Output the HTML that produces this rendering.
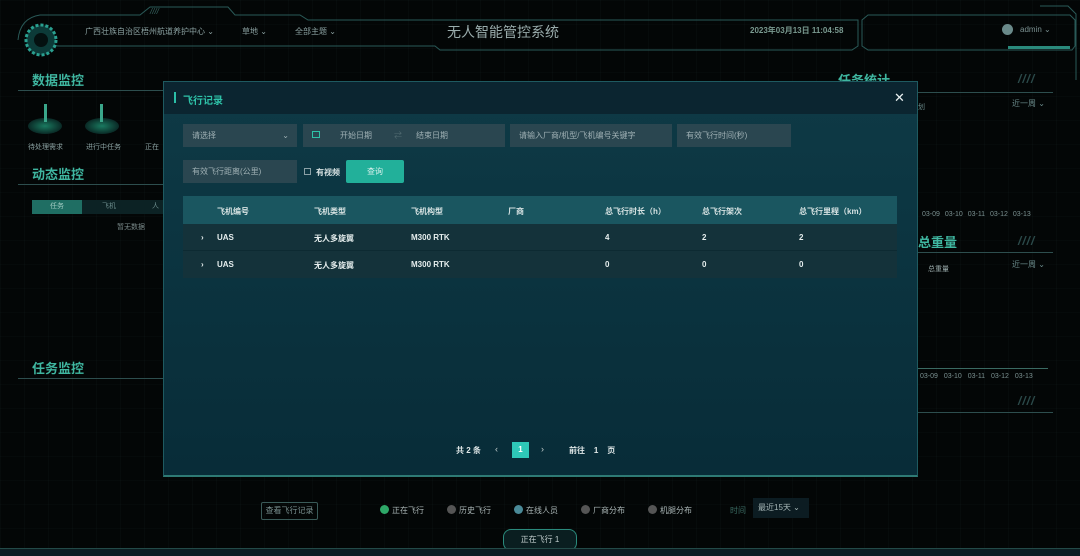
<!DOCTYPE html>
<html><head><meta charset="utf-8"><style>
*{margin:0;padding:0;box-sizing:border-box}
body{width:1080px;height:556px;background:#030606;overflow:hidden;position:relative;font-family:"Liberation Sans","Noto Sans CJK SC",sans-serif;color:#cfd8d8;font-size:8px}
.a{position:absolute}
.grid{position:absolute;inset:0;background-image:linear-gradient(90deg,rgba(40,70,70,.09) 1px,transparent 1px),linear-gradient(rgba(40,70,70,.06) 1px,transparent 1px);background-size:24px 24px}
.sec{position:absolute;color:#3fb6a0;font-size:13px;font-weight:bold}
.ln{position:absolute;height:1px;background:#2d4e4e}
.inp{position:absolute;background:#2a4650;height:23px;color:#9fb0b4;font-size:8px;line-height:23px;padding-left:9px;white-space:nowrap}
.th{position:absolute;top:206px;font-size:8px;color:#d6e2e2;font-weight:bold}
.td{position:absolute;font-size:8px;color:#e6eeee;font-weight:bold}
.st{position:absolute;color:#2b4a4a;font-size:12px;letter-spacing:1px;font-style:italic;font-weight:bold}
.lg{position:absolute;top:505px;font-size:8px;color:#aab6b6;white-space:nowrap}
.dot{display:inline-block;width:9px;height:9px;border-radius:50%;vertical-align:-1px;margin-right:3px}
</style></head><body>
<div class="grid"></div>
<svg class="a" style="left:0;top:0" width="1080" height="80">
<g fill="none" stroke="#2a5a58" stroke-width="1">
<path d="M18 40 Q20 18 40 15 L140 15 L150 7 L228 7 L235 15 L300 15 L308 20 L858 20 L858 46 L852 50 L440 50 L435 46 L60 46 Q40 46 40 40"/>
<path d="M862 20 L862 46 L868 50 L1072 50 L1075 46 L1075 20 L1070 15 L868 15 Z"/>
<path d="M1040 6 L1068 6 L1076 14 L1076 82 L1064 92"/>
</g>
<rect x="1008" y="46" width="62" height="3" fill="#2a8a7c"/>
<circle cx="41" cy="40" r="15" fill="#0c3a38" stroke="#2aa090" stroke-width="3" stroke-dasharray="3 2"/>
<circle cx="41" cy="40" r="7" fill="#041010"/>
<text x="150" y="14" fill="#3a6a66" font-size="8" font-style="italic">////</text>
</svg>
<div class="a" style="left:85px;top:26px;color:#8aa0a0;font-size:8px">广西壮族自治区梧州航道养护中心 ⌄</div>
<div class="a" style="left:242px;top:26px;color:#8aa0a0;font-size:8px">草地 ⌄</div>
<div class="a" style="left:295px;top:26px;color:#8aa0a0;font-size:8px">全部主题 ⌄</div>
<div class="a" style="left:447px;top:22px;color:#9aacac;font-size:14px">无人智能管控系统</div>
<div class="a" style="left:750px;top:25px;color:#7a9a90;font-size:8px;font-weight:bold">2023年03月13日 11:04:58</div>
<div class="a" style="left:1002px;top:24px;width:11px;height:11px;border-radius:50%;background:#6a8a8a"></div>
<div class="a" style="left:1020px;top:25px;color:#7a9090;font-size:8px">admin ⌄</div>
<div class="sec" style="left:32px;top:70px">数据监控</div>
<div class="ln" style="left:18px;top:90px;width:145px"></div>
<div class="sec" style="left:32px;top:164px">动态监控</div>
<div class="ln" style="left:18px;top:184px;width:145px"></div>
<div class="sec" style="left:32px;top:358px">任务监控</div>
<div class="ln" style="left:18px;top:378px;width:145px"></div>
<div class="a" style="left:28px;top:118px;width:34px;height:16px;border-radius:50%;background:radial-gradient(#1a7a60,#0a2a26 70%)"></div>
<div class="a" style="left:85px;top:118px;width:34px;height:16px;border-radius:50%;background:radial-gradient(#1a7a60,#0a2a26 70%)"></div>
<div class="a" style="left:44px;top:104px;width:3px;height:18px;background:#3aa68a"></div>
<div class="a" style="left:100px;top:104px;width:3px;height:18px;background:#3aa68a"></div>
<div class="a" style="left:28px;top:142px;color:#8aa0a0;font-size:7px">待处理需求</div>
<div class="a" style="left:86px;top:142px;color:#8aa0a0;font-size:7px">进行中任务</div>
<div class="a" style="left:145px;top:142px;color:#8aa0a0;font-size:7px">正在</div>
<div class="a" style="left:32px;top:200px;width:50px;height:14px;background:#1f6e63;color:#9fc9c0;font-size:7px;text-align:center;line-height:14px">任务</div>
<div class="a" style="left:82px;top:200px;width:81px;height:14px;background:#0c2224;color:#6a8a8a;font-size:7px;line-height:14px;white-space:nowrap"><span class="a" style="left:20px">飞机</span><span class="a" style="left:70px">人</span></div>
<div class="a" style="left:117px;top:222px;color:#7a8a8a;font-size:7px">暂无数据</div>
<div class="sec" style="left:838px;top:70px">任务统计</div>
<div class="st" style="left:1018px;top:72px">////</div>
<div class="ln" style="left:918px;top:92px;width:135px"></div>
<div class="a" style="left:1012px;top:98px;color:#6a8a8a;font-size:8px">近一周 ⌄</div>
<div class="a" style="left:918px;top:102px;color:#6a8a8a;font-size:7px">划</div>
<div class="a" style="left:922px;top:211px;color:#7a9090;font-size:7px;word-spacing:3px">03-09 03-10 03-11 03-12 03-13</div>
<div class="sec" style="left:918px;top:232px">总重量</div>
<div class="st" style="left:1018px;top:234px">////</div>
<div class="ln" style="left:918px;top:252px;width:135px"></div>
<div class="a" style="left:928px;top:264px;color:#9aaaaa;font-size:7px">总重量</div>
<div class="a" style="left:1012px;top:259px;color:#6a8a8a;font-size:8px">近一周 ⌄</div>
<div class="ln" style="left:918px;top:368px;width:130px;background:#3a6a62"></div>
<div class="a" style="left:920px;top:373px;color:#7a9090;font-size:7px;word-spacing:4px">03-09 03-10 03-11 03-12 03-13</div>
<div class="st" style="left:1018px;top:394px">////</div>
<div class="ln" style="left:918px;top:412px;width:135px"></div>
<div class="a" style="left:261px;top:502px;width:57px;height:18px;border:1px solid #3a5a58;border-radius:2px;color:#7a9090;font-size:8px;text-align:center;line-height:16px">查看飞行记录</div>
<div class="lg" style="left:380px"><span class="dot" style="background:#2ea868"></span>正在飞行</div>
<div class="lg" style="left:447px"><span class="dot" style="background:#555"></span>历史飞行</div>
<div class="lg" style="left:514px"><span class="dot" style="background:#4a8a98"></span>在线人员</div>
<div class="lg" style="left:581px"><span class="dot" style="background:#555"></span>厂商分布</div>
<div class="lg" style="left:648px"><span class="dot" style="background:#555"></span>机腿分布</div>
<div class="a" style="left:730px;top:505px;color:#3a6a62;font-size:8px">时间</div>
<div class="a" style="left:753px;top:498px;width:56px;height:20px;background:#0c1c22;color:#a8b8b8;font-size:8px;line-height:20px;padding-left:5px">最近15天 ⌄</div>
<div class="a" style="left:503px;top:529px;width:74px;height:22px;border:1px solid #2a8a7c;border-radius:8px;background:#0a1e20;color:#c0cccc;font-size:8px;text-align:center;line-height:20px">正在飞行 1</div>
<div class="a" style="left:0;top:548px;width:1080px;height:8px;background:#0c1e22;border-top:1px solid #234a48"></div>
<div class="a" style="left:163px;top:81px;width:755px;height:396px;background:linear-gradient(#0e3a46,#082c38);border:1px solid #1e5a60;border-bottom:2px solid #2e7a74">
 <div style="height:32px;background:#0b2530"></div>
</div>
<div class="a" style="left:174px;top:92px;width:2px;height:11px;background:#2bbfa8"></div>
<div class="a" style="left:183px;top:92px;color:#2ec2a8;font-size:10px;font-weight:bold">飞行记录</div>
<div class="a" style="left:894px;top:90px;color:#e8f0f0;font-size:13px">✕</div>
<div class="inp" style="left:183px;top:124px;width:114px">请选择<span style="position:absolute;right:8px">⌄</span></div>
<div class="inp" style="left:303px;top:124px;width:202px"><span style="display:inline-block;width:8px;height:7px;border:1px solid #2ec2a8;margin-right:20px"></span>开始日期<span style="margin-left:22px;color:#506a70">⇄</span><span style="margin-left:14px">结束日期</span></div>
<div class="inp" style="left:510px;top:124px;width:162px">请输入厂商/机型/飞机编号关键字</div>
<div class="inp" style="left:677px;top:124px;width:114px">有效飞行时间(秒)</div>
<div class="inp" style="left:183px;top:160px;width:114px">有效飞行距离(公里)</div>
<div class="a" style="left:304px;top:168px;width:7px;height:7px;border:1px solid #8aa0a6"></div>
<div class="a" style="left:316px;top:167px;color:#d8e2e2;font-size:8px;font-weight:bold">有视频</div>
<div class="a" style="left:346px;top:160px;width:58px;height:23px;background:#22b09a;border-radius:2px;color:#d8f0ec;font-size:8px;text-align:center;line-height:23px">查询</div>
<div class="a" style="left:183px;top:196px;width:714px;height:28px;background:#1a5660"></div>
<div class="a" style="left:183px;top:224px;width:714px;height:27px;background:#14323a;border-bottom:1px solid #0d2a32"></div>
<div class="a" style="left:183px;top:251px;width:714px;height:27px;background:#14323a"></div>
<div class="th" style="left:217px">飞机编号</div><div class="th" style="left:314px">飞机类型</div><div class="th" style="left:411px">飞机构型</div><div class="th" style="left:508px">厂商</div><div class="th" style="left:605px">总飞行时长（h）</div><div class="th" style="left:702px">总飞行架次</div><div class="th" style="left:799px">总飞行里程（km）</div>
<div class="td" style="left:201px;top:233px">›</div><div class="td" style="left:217px;top:233px">UAS</div><div class="td" style="left:314px;top:233px">无人多旋翼</div><div class="td" style="left:411px;top:233px">M300 RTK</div><div class="td" style="left:605px;top:233px">4</div><div class="td" style="left:702px;top:233px">2</div><div class="td" style="left:799px;top:233px">2</div>
<div class="td" style="left:201px;top:260px">›</div><div class="td" style="left:217px;top:260px">UAS</div><div class="td" style="left:314px;top:260px">无人多旋翼</div><div class="td" style="left:411px;top:260px">M300 RTK</div><div class="td" style="left:605px;top:260px">0</div><div class="td" style="left:702px;top:260px">0</div><div class="td" style="left:799px;top:260px">0</div>
<div class="a" style="left:456px;top:445px;color:#e0e8e8;font-size:8px;font-weight:bold">共 2 条</div>
<div class="a" style="left:495px;top:444px;color:#c0cccc;font-size:9px">‹</div>
<div class="a" style="left:512px;top:442px;width:17px;height:16px;background:#2ec8b8;color:#fff;font-size:8px;text-align:center;line-height:16px;font-weight:bold">1</div>
<div class="a" style="left:541px;top:444px;color:#c0cccc;font-size:9px">›</div>
<div class="a" style="left:569px;top:445px;color:#e0e8e8;font-size:8px;font-weight:bold">前往 &nbsp;&nbsp;&nbsp;1 &nbsp;&nbsp;&nbsp;页</div>
</body></html>
